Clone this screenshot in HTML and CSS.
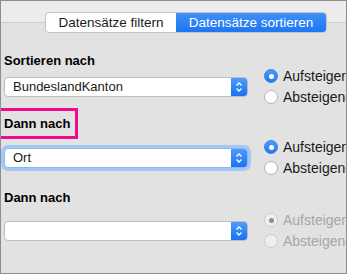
FILE: index.html
```html
<!DOCTYPE html>
<html lang="de">
<head>
  <meta charset="UTF-8">
  <title>Datensätze sortieren</title>
  <link rel="stylesheet" href="styles.css">
</head>
<body>
  <div class="panel">
    <div class="tabs-bar">
      <div class="tabs">
        <span class="tab">Datensätze filtern</span>
        <span class="tab active">Datensätze sortieren</span>
      </div>
    </div>

    <div class="section first">
      <div class="heading">Sortieren nach</div>
      <div class="row">
        <div class="select">
          <span class="select-value">BundeslandKanton</span>
          <span class="stepper">
            <svg width="8" height="12" viewBox="0 0 8 12"><path d="M1.5 4.5 L4 2 L6.5 4.5 M1.5 7.5 L4 10 L6.5 7.5" fill="none" stroke="#fff" stroke-width="1.3"/></svg>
          </span>
        </div>
        <div class="radios">
          <label class="radio checked"><span class="dot"></span>Aufsteigend</label>
          <label class="radio"><span class="dot"></span>Absteigend</label>
        </div>
      </div>
    </div>

    <div class="section second">
      <div class="heading"><span class="marked">Dann nach</span></div>
      <div class="row">
        <div class="select focused">
          <span class="select-value">Ort</span>
          <span class="stepper">
            <svg width="8" height="12" viewBox="0 0 8 12"><path d="M1.5 4.5 L4 2 L6.5 4.5 M1.5 7.5 L4 10 L6.5 7.5" fill="none" stroke="#fff" stroke-width="1.3"/></svg>
          </span>
        </div>
        <div class="radios">
          <label class="radio checked"><span class="dot"></span>Aufsteigend</label>
          <label class="radio"><span class="dot"></span>Absteigend</label>
        </div>
      </div>
    </div>

    <div class="section third">
      <div class="heading">Dann nach</div>
      <div class="row">
        <div class="select">
          <span class="select-value"></span>
          <span class="stepper">
            <svg width="8" height="12" viewBox="0 0 8 12"><path d="M1.5 4.5 L4 2 L6.5 4.5 M1.5 7.5 L4 10 L6.5 7.5" fill="none" stroke="#fff" stroke-width="1.3"/></svg>
          </span>
        </div>
        <div class="radios disabled">
          <label class="radio checked"><span class="dot"></span>Aufsteigend</label>
          <label class="radio"><span class="dot"></span>Absteigend</label>
        </div>
      </div>
    </div>
  </div>
</body>
</html>
```

FILE: styles.css
```css
:root {
  --blue: #2f86f6;
  --blue-dark: #1a6fee;
  --text: #1a1a1a;
  --border: #bdbdbd;
  --mark: #ee0a8c;
}

* {
  box-sizing: border-box;
}

body {
  margin: 0;
  font-family: 'Liberation Sans', Arial, sans-serif;
  font-size: 13px;
  color: var(--text);
}

.panel {
  width: 347px;
  height: 274px;
  border: 1px solid #8e8e8e;
  background: #e2e2e2;
  overflow: hidden;
}

.tabs-bar {
  padding: 11px 0 0 44px;
  background: linear-gradient(#ececec 0 21px, #cfcfcf 21px 22px, #e2e2e2 22px);
}

.tabs {
  display: flex;
  width: 282px;
  height: 21px;
  border-radius: 4px;
  border: 1px solid #c4c4c4;
  background: #fff;
  overflow: hidden;
}

.tab {
  display: flex;
  align-items: center;
  justify-content: center;
  width: 130px;
  font-size: 13.5px;
  line-height: 1;
}

.tab.active {
  flex: 1;
  color: #fff;
  background: linear-gradient(#3d90f8, #1f76f1);
}

.section {
  padding-left: 3px;
}

.section.first {
  margin-top: 20px;
}

.section.second {
  margin-top: 12px;
}

.section.third {
  margin-top: 15px;
}

.heading {
  font-weight: bold;
  font-size: 13px;
  line-height: 16px;
  color: #000;
}

.marked {
  outline: 3px solid var(--mark);
  outline-offset: 5px;
}

.row {
  display: flex;
  align-items: center;
  gap: 16px;
  margin-top: 0;
}

.second .row {
  margin-top: 8px;
}

.third .row {
  margin-top: 7px;
}

.select {
  display: flex;
  width: 244px;
  height: 20px;
  flex: none;
  border: 1px solid var(--border);
  border-radius: 4px;
  background: #fff;
  overflow: hidden;
}

.select.focused {
  border-color: #8fb8ef;
  box-shadow: 0 0 0 3px #a5c7f3;
}

.select-value {
  flex: 1;
  padding-left: 8px;
  font-size: 13px;
  line-height: 18px;
}

.stepper {
  display: flex;
  align-items: center;
  justify-content: center;
  width: 16px;
  background: linear-gradient(#4b9cfa, #1c72ef);
}

.radios {
  display: flex;
  flex-direction: column;
  gap: 7px;
  white-space: nowrap;
}

.radio {
  display: flex;
  align-items: center;
  gap: 5px;
  font-size: 14px;
  line-height: 14px;
}

.dot {
  width: 14px;
  height: 14px;
  flex: none;
  border-radius: 50%;
  border: 1px solid #b5b5b5;
  background: #fff;
  display: flex;
  align-items: center;
  justify-content: center;
}

.radio.checked .dot {
  border-color: #2e83f4;
  background: linear-gradient(#4b9cfa, #2178f1);
}

.radio.checked .dot::after {
  content: '';
  width: 5px;
  height: 5px;
  border-radius: 50%;
  background: #fff;
}

.disabled .radio {
  color: #a6a6a6;
}

.disabled .dot,
.disabled .radio.checked .dot {
  background: #efefef;
  border-color: #cdcdcd;
}

.disabled .radio.checked .dot::after {
  background: #8c8c8c;
}
```
